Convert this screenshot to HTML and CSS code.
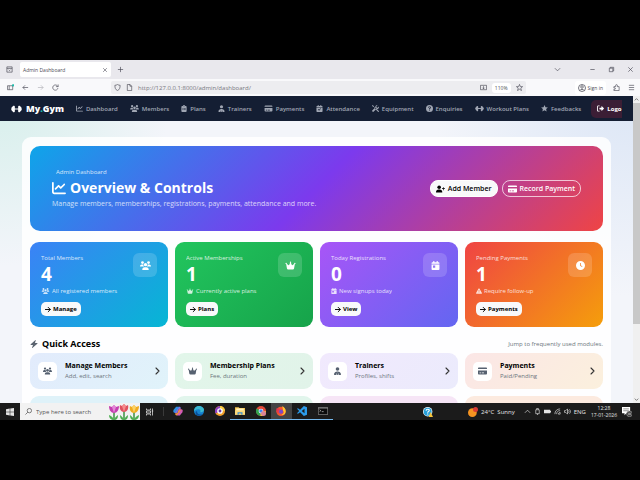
FILE: index.html
```html
<!DOCTYPE html>
<html lang="en">

<head>
  <meta charset="UTF-8">
  <meta name="viewport" content="width=device-width, initial-scale=1.0">
  <title>Admin Dashboard</title>
  <link rel="stylesheet" href="styles.css">
</head>

<body>
  <!-- icon sprite -->
  <svg class="sprite" aria-hidden="true">
    <symbol id="chart" viewBox="0 0 512 512"><path d="M64 64c0-17.700-14.300-32-32-32S0 46.300 0 64V400c0 44.200 35.800 80 80 80H480c17.700 0 32-14.300 32-32s-14.300-32-32-32H80c-8.800 0-16-7.200-16-16V64zm406.600 86.600c12.500-12.500 12.500-32.800 0-45.300s-32.800-12.500-45.300 0L320 210.700l-57.400-57.400c-12.500-12.500-32.800-12.500-45.300 0l-112 112c-12.500 12.500-12.500 32.800 0 45.300s32.800 12.500 45.300 0L240 221.300l57.400 57.400c12.500 12.500 32.800 12.500 45.300 0l128-128z"/></symbol>
    <symbol id="crown" viewBox="0 0 576 512"><path d="M309 106c11.400-7 19-19.700 19-34c0-22.100-17.900-40-40-40s-40 17.900-40 40c0 14.400 7.600 27 19 34L209.700 220.600c-9.100 18.200-32.700 23.400-48.600 10.700L72 160c5-6.700 8-15 8-24c0-22.100-17.900-40-40-40S0 113.900 0 136s17.900 40 40 40c.2 0 .5 0 .7 0L86.400 427.400c5.500 30.400 32 52.600 63 52.600H426.600c30.900 0 57.400-22.100 63-52.600L535.300 176c.2 0 .5 0 .7 0c22.100 0 40-17.900 40-40s-17.900-40-40-40s-40 17.900-40 40c0 9 3 17.300 8 24l-89.100 71.300c-15.900 12.700-39.500 7.500-48.600-10.700L309 106z"/></symbol>
    <symbol id="users" viewBox="0 0 20 16"><circle cx="4.500" cy="2.700" r="2.500"/><circle cx="15.500" cy="2.700" r="2.500"/><circle cx="10" cy="6.500" r="3"/><path d="M0 9.500C0 7.500 1.500 6 3.300 6h1.500l1.400.4A4 4 0 0 0 7.300 10H.7a.7.7 0 0 1-.7-.5zM20 9.500C20 7.500 18.500 6 16.700 6h-1.500l-1.400.4A4 4 0 0 1 12.700 10h6.600a.7.7 0 0 0 .7-.5zM4 15.200C4 12.800 5.800 11 8.200 11h3.600c2.400 0 4.200 1.800 4.200 4.200 0 .5-.4.800-.8.800H4.800a.8.8 0 0 1-.8-.8z"/></symbol>
    <symbol id="dumbbell" viewBox="0 0 20 16"><path d="M3 3.500C3 2.700 3.700 2 4.500 2h1C6.300 2 7 2.700 7 3.500V7h6V3.500c0-.8.700-1.500 1.500-1.500h1c.8 0 1.500.7 1.500 1.500V4c1.100 0 2 .9 2 2v1c.600 0 1 .400 1 1s-.400 1-1 1v1c0 1.100-.9 2-2 2v.5c0 .8-.7 1.500-1.500 1.500h-1c-.8 0-1.500-.7-1.500-1.500V9H7v3.500c0 .8-.7 1.500-1.500 1.500h-1c-.8 0-1.500-.7-1.500-1.500V12c-1.100 0-2-.9-2-2V9C.4 9 0 8.600 0 8s.4-1 1-1V6c0-1.100.9-2 2-2z"/></symbol>
    <symbol id="clipboard" viewBox="0 0 12 16"><path fill-rule="evenodd" d="M2 2h1.200a3 3 0 0 1 5.600 0H10c1.100 0 2 .9 2 2v10c0 1.100-.9 2-2 2H2c-1.100 0-2-.9-2-2V4c0-1.100.9-2 2-2zm4-.5a1 1 0 1 0 0 2 1 1 0 0 0 0-2zM2 7v1.200h1.500V7zm2.500 0v1.200H10V7zM2 10.500v1.200h1.500v-1.200zm2.500 0v1.200H10v-1.200z"/></symbol>
    <symbol id="trainer" viewBox="0 0 14 16"><circle cx="7" cy="4" r="3.600"/><path d="M0 15c0-3 2-5 4.500-5.500L6 9h2l1.500.5C12 10 14 12 14 15c0 .6-.4 1-1 1H9.500L8 11.500H6L4.500 16H1c-.6 0-1-.4-1-1z"/><path d="M6.300 11h1.400l.8 4L7 16l-1.500-1z"/></symbol>
    <symbol id="card" viewBox="0 0 18 16"><path fill-rule="evenodd" d="M2 1h14c1.100 0 2 .9 2 2v1H0V3c0-1.100.9-2 2-2zM0 7h18v6c0 1.100-.9 2-2 2H2c-1.100 0-2-.9-2-2zm3 4v1.500h3V11zm4.500 0v1.500H12V11z"/></symbol>
    <symbol id="calcheck" viewBox="0 0 14 16"><path fill-rule="evenodd" d="M3 0h2v2h4V0h2v2h1.500c.8 0 1.500.7 1.500 1.500V5H0V3.500C0 2.700.7 2 1.500 2H3zM0 6h14v8.500c0 .8-.7 1.500-1.500 1.500h-11C.7 16 0 15.300 0 14.500zm10.500 2.200-1-1L6 11 4.500 9.400l-1 1L6 13z"/></symbol>
    <symbol id="calday" viewBox="0 0 14 16"><path fill-rule="evenodd" d="M3 0h2v2h4V0h2v2h1.500c.8 0 1.500.7 1.500 1.500V5H0V3.500C0 2.700.7 2 1.500 2H3zM0 6h14v8.500c0 .8-.7 1.500-1.500 1.500h-11C.7 16 0 15.300 0 14.500zm2.500 2v4h4V8z"/></symbol>
    <symbol id="tools" viewBox="0 0 16 16"><path d="M1 0 4 2l.5 2L8 7l3 2 4.500 4.500c.6.600.6 1.200 0 1.800s-1.200.6-1.800 0L9 11 7.500 8 4 4.500 2 4 0 1zM15.700 3.300 13 6l-2.500-.5L10 3 12.700.3A4.500 4.500 0 0 0 7.500 5.500L1 12a2.100 2.100 0 0 0 3 3l6-6a4.500 4.500 0 0 0 5.700-5.700z"/></symbol>
    <symbol id="question" viewBox="0 0 16 16"><path fill-rule="evenodd" d="M8 0a8 8 0 1 1 0 16A8 8 0 0 1 8 0zM5 6h1.700c0-.8.500-1.200 1.300-1.200s1.400.4 1.400 1.100c0 1-2.200 1.200-2.200 3v.6h1.700c0-1.500 2.300-1.600 2.300-3.700C11.200 4.200 9.900 3.200 8 3.200S5 4.300 5 6zm2 4.800v1.800h2v-1.800z"/></symbol>
    <symbol id="star" viewBox="0 0 16 16"><path d="m8 0 2.300 5 5.500.6-4.100 3.800 1.200 5.500L8 12.200l-4.900 2.700 1.200-5.500L.2 5.600 5.700 5z"/></symbol>
    <symbol id="logout" viewBox="0 0 16 16"><path d="M6 1H3C1.300 1 0 2.300 0 4v8c0 1.700 1.300 3 3 3h3v-2H3c-.6 0-1-.4-1-1V4c0-.6.400-1 1-1h3zM5.500 6.800v2.400c0 .4.300.8.800.8H10v2.500c0 .7.800 1 1.200.5l4.500-4.400c.3-.3.300-.9 0-1.200L11.200 3c-.4-.5-1.200-.2-1.200.5V6H6.300c-.5 0-.8.400-.8.800z"/></symbol>
    <symbol id="useradd" viewBox="0 0 20 16"><circle cx="7" cy="4" r="4"/><path d="M0 15c0-3.300 2.500-5.700 5.600-5.700h2.800C11.500 9.300 14 11.700 14 15c0 .6-.4 1-1 1H1c-.6 0-1-.4-1-1zM15.800 4h1.500v2.500h2.500V8h-2.500v2.500h-1.500V8h-2.500V6.500h2.500z"/></symbol>
    <symbol id="arrow" viewBox="0 0 14 16"><path d="M1 8h11M7.500 3l5 5-5 5" fill="none" stroke="currentColor" stroke-width="2.200" stroke-linecap="round" stroke-linejoin="round"/></symbol>
    <symbol id="clock" viewBox="0 0 16 16"><path fill-rule="evenodd" d="M8 0a8 8 0 1 1 0 16A8 8 0 0 1 8 0zm-.8 3.500V8.400l3.500 2.400.9-1.200-2.900-2V3.500z"/></symbol>
    <symbol id="warning" viewBox="0 0 16 16"><path fill-rule="evenodd" d="M8 1c.5 0 .9.200 1.100.6l6.700 11.500c.6.900 0 1.900-1.100 1.900H1.300C.2 15-.4 14 .2 13.100L6.900 1.600C7.100 1.200 7.500 1 8 1zm-.8 4v5h1.600V5zm0 6v1.700h1.600V11z"/></symbol>
    <symbol id="bolt" viewBox="0 0 14 16"><path d="M10.500.5c.3-.5-.1-.8-.6-.4L.4 8.400c-.7.600-.4 1.600.5 1.600H5l-2 5.300c-.2.700.4.900.8.500l9.800-8.300c.7-.6.300-1.500-.5-1.500H9z"/></symbol>
    <symbol id="chevron" viewBox="0 0 10 16"><path d="m2 2 6 6-6 6" fill="none" stroke="currentColor" stroke-width="2.200" stroke-linecap="round" stroke-linejoin="round"/></symbol>
  </svg>

  <div class="screen">
    <!-- browser chrome -->
    <div class="tab-strip">
      <button class="tool-btn" aria-label="Tab overview"><svg viewBox="0 0 16 16" class="line"><path d="M2 2h12v12H2zM2 5.500h12M6 8.500l2 2 2-2"/></svg></button>
      <div class="tab">
        <span>Admin Dashboard</span>
        <button class="tab-close" aria-label="Close tab"><svg viewBox="0 0 16 16" class="line"><path d="m3 3 10 10M13 3 3 13"/></svg></button>
      </div>
      <button class="tool-btn" aria-label="New tab"><svg viewBox="0 0 16 16" class="line"><path d="M8 2v12M2 8h12"/></svg></button>
      <div class="window-btns">
        <button class="tool-btn" aria-label="List tabs"><svg viewBox="0 0 16 16" class="line"><path d="m2 5 6 6 6-6"/></svg></button>
        <button class="tool-btn min-btn" aria-label="Minimize"><svg viewBox="0 0 16 16" class="line"><path d="M3 8h10"/></svg></button>
        <button class="tool-btn" aria-label="Restore"><svg viewBox="0 0 16 16" class="line"><path d="M3 5h8v8H3zM5 5V3h8v8h-2"/></svg></button>
        <button class="tool-btn" aria-label="Close"><svg viewBox="0 0 16 16" class="line"><path d="m3 3 10 10M13 3 3 13"/></svg></button>
      </div>
    </div>

    <div class="toolbar">
      <button class="tool-btn" aria-label="Sidebar"><svg viewBox="0 0 16 16" class="line"><path d="M1 4h12v9H1zM5 4v9"/><circle cx="14" cy="3" r="2" fill="#14b8a6" stroke="#14b8a6"/></svg></button>
      <button class="tool-btn" aria-label="Back"><svg viewBox="0 0 16 16" class="line"><path d="M14 8H2M7 3 2 8l5 5"/></svg></button>
      <button class="tool-btn faded" aria-label="Forward"><svg viewBox="0 0 16 16" class="line"><path d="M2 8h12M9 3l5 5-5 5"/></svg></button>
      <button class="tool-btn" aria-label="Reload"><svg viewBox="0 0 16 16" class="line"><path d="M13.500 9.500A6 6 0 1 1 12 4l2 2M14 1v5H9"/></svg></button>
      <div class="url-bar">
        <svg viewBox="0 0 16 16" class="line"><path d="M8 1c2 1.500 4 2 6 2 0 6-1.500 10-6 12C3.500 13 2 9 2 3c2 0 4-.5 6-2z"/></svg>
        <svg viewBox="0 0 16 16" class="line"><path d="M3 1h6l4 4v10H3zM9 1v4h4"/></svg>
        <input type="text" class="url" aria-label="Address" value="http://127.0.0.1:8000/admin/dashboard/">
        <svg viewBox="0 0 16 16" class="line"><path d="M1 3h14v10H1zM8 5v6M5.500 8.500 8 11l2.500-2.500"/></svg>
        <button class="zoom-level">110%</button>
        <svg viewBox="0 0 16 16" class="line"><path d="m8 1 2 5h5l-4 3.500 1.500 5.500L8 12l-4.500 3L5 9.500 1 6h5z"/></svg>
      </div>
      <button class="sign-in"><svg viewBox="0 0 16 16" class="line"><circle cx="8" cy="8" r="7"/><circle cx="8" cy="6" r="2.500"/><path d="M3.500 13c1-3 8-3 9 0"/></svg>Sign in</button>
      <button class="tool-btn" aria-label="Extensions"><svg viewBox="0 0 16 16" class="line"><path d="M2 6h4V3.500a2 2 0 0 1 4 0V6h4v9H2v-3h2a1.500 1.500 0 0 0 0-3H2z"/></svg></button>
      <button class="tool-btn" aria-label="Menu"><svg viewBox="0 0 16 16" class="line"><path d="M2 3h12M2 8h12M2 13h12"/></svg></button>
    </div>

    <div class="viewport">
      <div class="page">
        <nav class="navbar">
          <div class="nav-inner">
            <a href="#" class="brand"><svg><use href="#dumbbell"/></svg><span>My<span class="dot">.</span>Gym</span></a>
            <a href="#"><svg><use href="#chart"/></svg>Dashboard</a>
            <a href="#"><svg class="wide"><use href="#users"/></svg>Members</a>
            <a href="#"><svg class="slim"><use href="#clipboard"/></svg>Plans</a>
            <a href="#"><svg><use href="#trainer"/></svg>Trainers</a>
            <a href="#"><svg class="wide"><use href="#card"/></svg>Payments</a>
            <a href="#"><svg><use href="#calcheck"/></svg>Attendance</a>
            <a href="#"><svg><use href="#tools"/></svg>Equipment</a>
            <a href="#"><svg><use href="#question"/></svg>Enquiries</a>
            <a href="#"><svg class="wide"><use href="#dumbbell"/></svg>Workout Plans</a>
            <a href="#"><svg><use href="#star"/></svg>Feedbacks</a>
            <a href="#" class="logout"><svg><use href="#logout"/></svg>Logo</a>
          </div>
        </nav>

        <main class="panel">
          <section class="hero">
            <div class="hero-text">
              <p class="hero-badge">Admin Dashboard</p>
              <h1><svg><use href="#chart"/></svg>Overview &amp; Controls</h1>
              <p class="hero-sub">Manage members, memberships, registrations, payments, attendance and more.</p>
            </div>
            <div class="hero-btns">
              <button class="btn btn-light"><svg><use href="#useradd"/></svg>Add Member</button>
              <button class="btn btn-outline"><svg><use href="#card"/></svg>Record Payment</button>
            </div>
          </section>

          <section class="stats">
            <div class="stat blue">
              <div class="stat-top">
                <div>
                  <p class="label">Total Members</p>
                  <p class="value">4</p>
                </div>
                <div class="stat-icon"><svg><use href="#users"/></svg></div>
              </div>
              <p class="note"><svg class="wide"><use href="#users"/></svg>All registered members</p>
              <button class="stat-btn"><svg><use href="#arrow"/></svg>Manage</button>
            </div>
            <div class="stat green">
              <div class="stat-top">
                <div>
                  <p class="label">Active Memberships</p>
                  <p class="value">1</p>
                </div>
                <div class="stat-icon"><svg><use href="#crown"/></svg></div>
              </div>
              <p class="note"><svg><use href="#crown"/></svg>Currently active plans</p>
              <button class="stat-btn"><svg><use href="#arrow"/></svg>Plans</button>
            </div>
            <div class="stat purple">
              <div class="stat-top">
                <div>
                  <p class="label">Today Registrations</p>
                  <p class="value">0</p>
                </div>
                <div class="stat-icon"><svg><use href="#calday"/></svg></div>
              </div>
              <p class="note"><svg class="slim"><use href="#calday"/></svg>New signups today</p>
              <button class="stat-btn"><svg><use href="#arrow"/></svg>View</button>
            </div>
            <div class="stat orange">
              <div class="stat-top">
                <div>
                  <p class="label">Pending Payments</p>
                  <p class="value">1</p>
                </div>
                <div class="stat-icon"><svg><use href="#clock"/></svg></div>
              </div>
              <p class="note"><svg class="slim"><use href="#warning"/></svg>Require follow-up</p>
              <button class="stat-btn"><svg><use href="#arrow"/></svg>Payments</button>
            </div>
          </section>

          <div class="quick-head">
            <h2><svg><use href="#bolt"/></svg>Quick Access</h2>
            <p>Jump to frequently used modules.</p>
          </div>

          <section class="quick">
            <a href="#" class="tile tile-blue">
              <span class="tile-icon"><svg><use href="#users"/></svg></span>
              <span class="tile-text"><strong>Manage Members</strong><span>Add, edit, search</span></span>
              <svg class="chevron"><use href="#chevron"/></svg>
            </a>
            <a href="#" class="tile tile-green">
              <span class="tile-icon"><svg><use href="#crown"/></svg></span>
              <span class="tile-text"><strong>Membership Plans</strong><span>Fee, duration</span></span>
              <svg class="chevron"><use href="#chevron"/></svg>
            </a>
            <a href="#" class="tile tile-purple">
              <span class="tile-icon"><svg><use href="#trainer"/></svg></span>
              <span class="tile-text"><strong>Trainers</strong><span>Profiles, shifts</span></span>
              <svg class="chevron"><use href="#chevron"/></svg>
            </a>
            <a href="#" class="tile tile-orange">
              <span class="tile-icon"><svg><use href="#card"/></svg></span>
              <span class="tile-text"><strong>Payments</strong><span>Paid/Pending</span></span>
              <svg class="chevron"><use href="#chevron"/></svg>
            </a>
            <div class="tile tile-cyan"></div>
            <div class="tile tile-mint"></div>
            <div class="tile tile-pink"></div>
            <div class="tile tile-amber"></div>
          </section>
        </main>
      </div>

      <div class="scrollbar">
        <svg viewBox="0 0 16 16" class="line"><path d="m4 10 4-4 4 4"/></svg>
        <div class="thumb"></div>
        <svg viewBox="0 0 16 16" class="line"><path d="m4 6 4 4 4-4"/></svg>
      </div>
    </div>

    <!-- taskbar -->
    <div class="taskbar">
      <button class="start" aria-label="Start"><svg viewBox="0 0 16 16" fill="#fff"><path d="M0 2.300 7.500 1.200v6.300H0zM8.500 1 16 0v7.500H8.500zM0 8.500h7.500v6.300L0 13.700zM8.500 8.500H16V16l-7.500-1z"/></svg></button>
      <div class="search">
        <svg viewBox="0 0 16 16" class="line"><circle cx="10" cy="6" r="5"/><path d="M6.500 9.500 1 15"/></svg>
        <input type="text" aria-label="Search" placeholder="Type here to search">
        <svg class="tulips" viewBox="0 0 32 16">
          <path d="M6 8v8M16 7v9M26 8v8" stroke="#3f9142" stroke-width="1.500"/>
          <path d="M6 16C5 13 3 12 1 11c0 3 2 5 5 5zm0 0c1-3 3-4 4-5 0 3-1 5-4 5zm10 0c-1-3-3-4-4-5 0 3 1 5 4 5zm0 0c1-3 3-4 4-5 0 3-1 5-4 5zm10 0c-1-3-3-4-4-5 0 3 1 5 4 5zm0 0c1-3 3-4 5-5 0 3-2 5-5 5z" fill="#4caf50"/>
          <path d="M1 2l3 1 2-2 2 2 3-1c0 4-2 7-5 7S1 6 1 2z" fill="#c53fb0"/><path d="M4 3l2-2 2 2-2 6z" fill="#e488d8"/>
          <path d="M12 1l2 1 2-2 2 2 2-1c1 4-1 7-4 7s-5-3-4-7z" fill="#e0525f"/><path d="M14 2l2-2 2 2-2 6z" fill="#f58d8d"/>
          <path d="M22 2l2 1 2-2 2 2 3-1c0 4-2 7-5 7s-5-3-4-7z" fill="#f0ab20"/><path d="M24 3l2-2 2 2-2 6z" fill="#fbd265"/>
        </svg>
      </div>
      <button class="task-view" aria-label="Task view"><svg viewBox="0 0 16 16" class="line"><path d="M1 1v3h8V1M1 15v-3h8v3M1 6h8v4H1zM13 1v14M11.500 6h3"/></svg></button>
      <div class="apps">
        <button class="app" aria-label="Copilot"><svg viewBox="0 0 16 16"><path d="M5 1h5L7 11H3C0 11 0 8 1 6z" fill="#2f8ee0"/><path d="M10 1c2 0 2 1 3 3L9 5 6 11H3z" fill="#8a6be0"/><path d="M11 15H6l3-10h4c3 0 3 3 2 5z" fill="#d35bb5"/><path d="M6 15c-2 0-2-1-3-3l4-1 3-6 3 1z" fill="#f0923a"/></svg></button>
        <button class="app" aria-label="Edge"><svg viewBox="0 0 16 16"><circle cx="8" cy="8" r="8" fill="#1583cf"/><path d="M0 8C0 3 4 0 8 0s8 3 8 6c0 4-6 5-6 3 1-2 0-4-3-4-4 0-7 3-7 3z" fill="#3cb9cf"/><path d="M5 8c-1 4 3 7 9 5-3 4-9 3-11 0-2-4 2-5 2-5z" fill="#0b4f99"/></svg></button>
        <button class="app" aria-label="Browser"><svg viewBox="0 0 16 16"><circle cx="8" cy="8" r="8" fill="#f3a12c"/><path d="M8 0a8 8 0 0 0-7 12l7-4z" fill="#8c3fc0"/><path d="M8 0a8 8 0 0 1 8 8H8z" fill="#f6c945"/><circle cx="8" cy="8" r="4.500" fill="#fff"/><circle cx="8" cy="8" r="2.300" fill="#6a3ba5"/></svg></button>
        <button class="app open" aria-label="File Explorer"><svg viewBox="0 0 16 16"><path d="M0 2h6l1 1h9v11H0z" fill="#f2c34d"/><path d="M2 4h12v5H2z" fill="#fff2c0"/><path d="M0 7h16v7H0z" fill="#fbd979"/><path d="M4 14v-4h8v4h-2v-2H6v2z" fill="#3d8fd1"/></svg></button>
        <button class="app open" aria-label="Chrome"><svg viewBox="0 0 16 16"><circle cx="8" cy="8" r="8" fill="#e24a3b"/><path d="M8 8 1 4a8 8 0 0 0 6 12z" fill="#31a350"/><path d="M8 8h8a8 8 0 0 1-9 8z" fill="#f7c92f"/><circle cx="8" cy="8" r="3.800" fill="#fff"/><circle cx="8" cy="8" r="2.800" fill="#4285f4"/><circle cx="12" cy="12" r="4" fill="#d9849a"/></svg></button>
        <button class="app open active" aria-label="Firefox"><svg viewBox="0 0 16 16"><circle cx="8" cy="8.500" r="7.500" fill="#f4552e"/><path d="M10 0c3 2 6 5 5.500 9-.5 4-4 6-7 5 4-1 5-4 3-6z" fill="#ffc52f"/><path d="M1 3c1 1 3 0 5 2-2 2-3 4-1 7-4-1-5-5-4-9z" fill="#e8344f"/><circle cx="8" cy="9" r="3.300" fill="#7949c9"/></svg></button>
        <button class="app open" aria-label="VS Code"><svg viewBox="0 0 16 16"><path d="M11 0 16 2v12l-5 2L5 10l-3.500 2.500L0 11.500 3.500 8 0 4.500l1.500-1L5 6zm1 4.500L7.500 8l4.500 3.500z" fill="#2b9cec"/></svg></button>
        <button class="app open" aria-label="Terminal"><svg viewBox="0 0 16 16"><path d="M0 2h16v12H0z" fill="#888"/><path d="M1 4h14v9H1z" fill="#0c0c0c"/><path d="m2.500 6 2 1.500-2 1.500M6 9h3" stroke="#ddd" fill="none"/></svg></button>
      </div>
      <button class="help" aria-label="Get help"><svg viewBox="0 0 16 16"><circle cx="7.500" cy="7.500" r="7.500" fill="#e9f6fd"/><circle cx="7.500" cy="7.500" r="6.300" fill="#27a0da"/><path d="M5 6c0-3 5-3 5-.5C10 7 7.500 7 7.500 9M7.500 10.500v1.500" stroke="#fff" stroke-width="1.800" fill="none"/><path d="m12 8 4 8H9z" fill="#f5c33b"/></svg></button>
      <button class="weather"><svg viewBox="0 0 16 16"><circle cx="7" cy="9" r="7" fill="#f59321"/><circle cx="12" cy="4" r="4" fill="#d93b34"/></svg>24°C&nbsp; Sunny</button>
      <div class="tray">
        <svg viewBox="0 0 16 16" class="line"><path d="m2 11 6-6 6 6"/></svg>
        <svg viewBox="0 0 16 16" class="line"><path d="M4 4h8v9H4zM6 4V1h4v3M8 13v3"/></svg>
        <svg viewBox="0 0 16 16" fill="#fff"><path d="M0 4h14v2h2v4h-2v2H0z"/></svg>
        <svg viewBox="0 0 16 16" class="line"><path d="M2 14C2 7 7 2 14 2M6 14c0-5 3-8 8-8M10 14c0-2 2-4 4-4v4z"/></svg>
        <svg viewBox="0 0 16 16" class="line"><path d="M1 6h3l4-4v12l-4-4H1zM10 5c2 2 2 4 0 6M12.500 3c3 3 3 7 0 10"/></svg>
        <span>ENG</span>
      </div>
      <div class="date">
        <span>12:28</span>
        <span>17-01-2026</span>
      </div>
      <button class="notify" aria-label="Notifications"><svg viewBox="0 0 16 16"><path d="M0 0h13v10H7l-3 3v-3H0z" fill="#fff"/><path d="M2 3h9M2 6h9" stroke="#555"/><circle cx="12" cy="11" r="4.500" fill="#333" stroke="#aaa"/><path d="M11 9v4M13 9v4" stroke="#fff"/></svg></button>
    </div>
  </div>
</body>

</html>
```
FILE: styles.css
```css
* {
  box-sizing: border-box;
}

body {
  margin: 0;
  padding: 60px 0;
  height: 100vh;
  background-color: black;
  font-family: "Open Sans", "Noto Sans", sans-serif;
  font-size: 6px;
  line-height: 10px;
  color: #0f172a;
  overflow: hidden;
}

h1, h2, p {
  margin: 0;
}

a {
  color: inherit;
  text-decoration: none;
}

button, input {
  font: inherit;
  color: inherit;
  border: none;
  background: none;
  padding: 0;
  margin: 0;
}

button {
  cursor: pointer;
}

svg {
  display: block;
  flex: none;
  width: 8px;
  height: 8px;
  fill: currentColor;
}

.line {
  fill: none;
  stroke: currentColor;
  stroke-width: 1.5;
}

.sprite {
  display: none;
}

.screen {
  display: flex;
  flex-direction: column;
  height: 100%;
}

/* browser */
.tab-strip {
  display: flex;
  align-items: center;
  height: 19px;
  padding: 0 5px 0 4px;
  background-color: #e9e8ed;
  color: #4a4a55;
  font-size: 5px;
}

.tool-btn {
  display: flex;
  align-items: center;
  justify-content: center;
  width: 10px;
  height: 14px;
}

.tool-btn svg, .url-bar svg {
  width: 7px;
  height: 7px;
}

.tab {
  display: flex;
  align-items: center;
  justify-content: space-between;
  width: 91px;
  height: 15px;
  margin: 0 4px 0 6px;
  padding: 0 3px;
  border-radius: 2px;
  background-color: white;
}

.tab-close svg {
  width: 6px;
  height: 6px;
}

.window-btns {
  display: flex;
  gap: 9px;
  margin-left: auto;
}

.min-btn {
  margin-left: 16px;
}

.toolbar {
  display: flex;
  align-items: center;
  gap: 5px;
  height: 17px;
  padding: 0 4px 0 5px;
  background-color: #f9f9fb;
  color: #4a4a55;
}

.faded {
  opacity: 0.4;
}

.url-bar {
  display: flex;
  flex: 1;
  align-items: center;
  gap: 5px;
  height: 13px;
  margin-left: 46px;
  padding: 0 3px;
  border-radius: 2px;
  background-color: #ededf0;
}

.url {
  flex: 1;
  min-width: 0;
  height: 11px;
  color: #77777f;
}

.zoom-level {
  padding: 0 3px;
  border-radius: 3px;
  background-color: white;
  font-size: 5px;
}

.sign-in {
  display: flex;
  align-items: center;
  gap: 2px;
  margin-left: 44px;
  padding: 2px 3px;
  border-radius: 3px;
  background-color: white;
  font-size: 5px;
}

.viewport {
  display: flex;
  flex: 1;
  min-height: 0;
}

.page {
  flex: 1;
  min-width: 0;
  overflow: hidden;
  background:
    radial-gradient(circle at 0 0, #d6efeb, transparent 170px),
    radial-gradient(circle at 100% 0, #dce6f6, transparent 200px),
    #f3f5fa;
}

.scrollbar {
  display: flex;
  flex-direction: column;
  justify-content: space-between;
  width: 7px;
  background-color: #f0f0f0;
  color: #444;
}

.scrollbar svg {
  width: 7px;
  height: 7px;
}

.thumb {
  height: 72%;
  margin-bottom: auto;
  background-color: #c8c8c8;
}

/* navbar */
.navbar {
  padding: 0 11px;
  background-color: #141e33;
}

.nav-inner {
  display: flex;
  align-items: center;
  gap: 12px;
  height: 25px;
  overflow: hidden;
  white-space: nowrap;
  color: #a0a6b3;
  font-weight: 600;
}

.nav-inner a {
  display: flex;
  flex: none;
  align-items: center;
  gap: 3px;
}

.nav-inner svg {
  width: 7px;
  height: 7px;
}

.nav-inner .wide, .note .wide {
  width: 9px;
}

.nav-inner .slim, .note .slim {
  width: 6px;
}

.nav-inner .brand {
  gap: 4px;
  color: white;
  font-size: 9px;
  font-weight: 800;
}

.nav-inner .brand svg {
  width: 11px;
  height: 10px;
}

.dot {
  color: #14b8a6;
}

.nav-inner .logout {
  flex: 1;
  height: 18px;
  margin-left: -2px;
  padding-left: 6px;
  border-radius: 5px 0 0 5px;
  background-color: #3b1e35;
  color: white;
  font-weight: 700;
}

/* main panel */
.panel {
  margin: 16px 22px;
  padding: 9px 8px;
  border-radius: 9px;
  background-color: rgba(255, 255, 255, 0.85);
}

.hero {
  display: flex;
  align-items: center;
  justify-content: space-between;
  padding: 21px 22px;
  border-radius: 10px;
  background: linear-gradient(135deg, #0ea5e9, #7c3aed 50%, #ef4444);
  color: white;
}

.hero-badge {
  padding: 0 4px;
  opacity: 0.8;
}

h1 {
  display: flex;
  align-items: center;
  gap: 4px;
  font-size: 14px;
  line-height: 21px;
}

h1 svg {
  width: 14px;
  height: 14px;
}

.hero-sub {
  font-size: 7px;
  line-height: 12px;
  opacity: 0.75;
}

.hero-btns {
  display: flex;
  gap: 4px;
}

.btn {
  display: flex;
  align-items: center;
  gap: 3px;
  height: 17px;
  padding: 0 5px;
  border: 1px solid white;
  border-radius: 8px;
  font-size: 7px;
  font-weight: 600;
  white-space: nowrap;
}

.btn svg {
  width: 9px;
}

.btn-light {
  background-color: #f8f9fa;
  color: black;
}

.btn-outline {
  border-color: rgba(255, 255, 255, 0.7);
}

/* stat cards */
.stats, .quick {
  display: grid;
  grid-template-columns: repeat(4, 1fr);
  gap: 7px;
}

.stats {
  margin-top: 11px;
}

.stat {
  padding: 11px;
  border-radius: 9px;
  color: white;
}

.stat-top {
  display: flex;
  justify-content: space-between;
}

.label, .note {
  opacity: 0.8;
}

.value {
  font-size: 19px;
  font-weight: 700;
  line-height: 22px;
}

.stat-icon {
  display: flex;
  align-items: center;
  justify-content: center;
  width: 24px;
  height: 24px;
  border-radius: 6px;
  background-color: rgba(255, 255, 255, 0.16);
}

.stat-icon svg {
  width: 11px;
  height: 9px;
}

.note {
  display: flex;
  align-items: center;
  gap: 2px;
  margin-top: 1px;
}

.note svg {
  height: 6px;
}

.stat-btn {
  display: flex;
  align-items: center;
  gap: 2px;
  height: 14px;
  margin-top: 6px;
  padding: 0 4px;
  border-radius: 5px;
  background-color: #f8f9fa;
  color: black;
  font-weight: 700;
}

.stat-btn svg {
  width: 6px;
  height: 7px;
}

.blue {
  background: linear-gradient(135deg, #3b82f6, #06b6d4);
}

.green {
  background: linear-gradient(135deg, #22c55e, #16a34a);
}

.purple {
  background: linear-gradient(135deg, #a855f7, #6366f1);
}

.orange {
  background: linear-gradient(135deg, #ef4444, #f59e0b);
}

/* quick access */
.quick-head {
  display: flex;
  align-items: center;
  justify-content: space-between;
  margin: 11px 0 3px;
  color: #6c757d;
}

h2 {
  display: flex;
  align-items: center;
  gap: 4px;
  color: black;
  font-size: 9px;
  line-height: 12px;
}

h2 svg {
  color: #5b6470;
}

.tile {
  display: flex;
  align-items: center;
  gap: 8px;
  height: 36px;
  padding: 0 8px;
  border-radius: 9px;
}

.tile-icon {
  display: flex;
  align-items: center;
  justify-content: center;
  width: 19px;
  height: 19px;
  border-radius: 5px;
  background-color: white;
  color: #566170;
}

.tile-icon svg {
  width: 9px;
}

.tile-text {
  display: flex;
  flex: 1;
  flex-direction: column;
  color: #6c757d;
}

.tile-text strong {
  color: black;
  font-size: 7px;
}

.chevron {
  width: 5px;
  color: #333;
}

.tile-blue {
  background: linear-gradient(135deg, #e2ebfc, #e0f3fa);
}

.tile-green {
  background: linear-gradient(135deg, #e2f6ea, #e1f3e9);
}

.tile-purple {
  background: linear-gradient(135deg, #f1e9fd, #ebebfc);
}

.tile-orange {
  background: linear-gradient(135deg, #fbe6e6, #fbf0dd);
}

.tile-cyan {
  background-color: #dff2f9;
}

.tile-mint {
  background-color: #e1f5ec;
}

.tile-pink {
  background-color: #f6e5f6;
}

.tile-amber {
  background-color: #fceadf;
}

/* taskbar */
.taskbar {
  display: flex;
  align-items: center;
  height: 17px;
  background-color: #1b1b1b;
  color: #e4e4e4;
  white-space: nowrap;
}

.start, .app {
  display: flex;
  align-items: center;
  justify-content: center;
  width: 20px;
  height: 17px;
}

.search {
  display: flex;
  align-items: center;
  width: 120px;
  height: 17px;
  padding-left: 5px;
  background-color: #f2f2f2;
  color: #444;
}

.search svg {
  width: 7px;
  height: 7px;
}

.search input {
  flex: 1;
  min-width: 0;
  padding-left: 4px;
}

.search input::placeholder {
  color: #555;
}

.search .tulips {
  width: 32px;
  height: 16px;
}

.task-view {
  width: 24px;
  height: 9px;
  padding-left: 6px;
  border-right: 1px solid #3a3a3a;
}

.apps {
  display: flex;
  width: 165px;
  margin-left: 4px;
}

.app {
  flex: 1;
  border-bottom: 1px solid transparent;
}

.app svg {
  width: 10px;
  height: 10px;
}

.open {
  border-bottom-color: #76b9ed;
}

.active {
  background-color: #444;
}

.help {
  margin-left: auto;
}

.help svg, .notify svg {
  width: 10px;
  height: 10px;
}

.weather {
  display: flex;
  align-items: center;
  gap: 3px;
  margin-left: 35px;
}

.weather svg {
  width: 10px;
  height: 10px;
}

.tray {
  display: flex;
  align-items: center;
  gap: 3px;
  margin-left: 9px;
}

.tray svg {
  width: 7px;
  height: 7px;
}

.date {
  display: flex;
  flex-direction: column;
  align-items: center;
  margin: 0 5px;
  font-size: 5px;
  line-height: 7px;
}

.notify {
  margin-right: 8px;
}
```
